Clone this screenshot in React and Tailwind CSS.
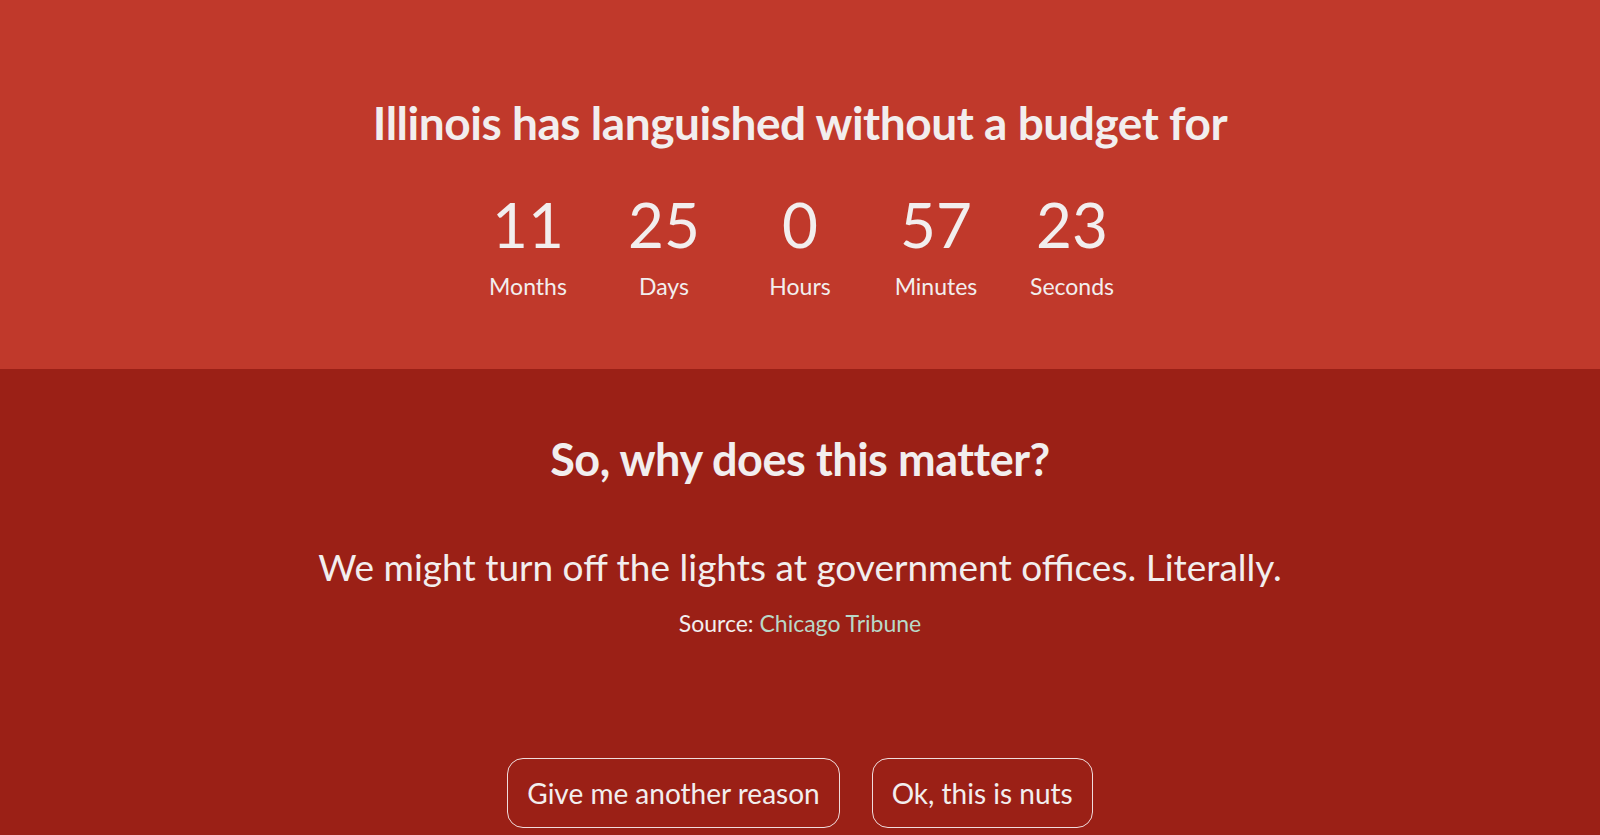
const units = [
  { value: "11", label: "Months" },
  { value: "25", label: "Days" },
  { value: "0", label: "Hours" },
  { value: "57", label: "Minutes" },
  { value: "23", label: "Seconds" },
];

export default function App() {
  return (
    <div className="min-h-[835px] bg-[#9b2016] font-['Lato',sans-serif] text-[#f2eeee]">
      {/* Countdown */}
      <section className="flex h-[369px] flex-col items-center bg-[#c0392b] pt-[100px]">
        <h1 className="text-[46px] font-bold leading-none tracking-[-0.01em]">
          Illinois has languished without a budget for
        </h1>
        <div className="mt-[47px] flex">
          {units.map((u) => (
            <div key={u.label} className="flex w-[136px] flex-col items-center">
              <span className="text-[62px] leading-none">{u.value}</span>
              <span className="mt-[20px] text-[23px] leading-none">{u.label}</span>
            </div>
          ))}
        </div>
      </section>

      {/* Reason */}
      <section className="flex flex-col items-center pt-[68px]">
        <h2 className="text-[45px] font-bold leading-none tracking-[-0.01em]">
          So, why does this matter?
        </h2>
        <p className="mt-[66px] text-[37px] leading-none">
          We might turn off the lights at government offices. Literally.
        </p>
        <p className="mt-[27px] text-[23px] leading-none">
          Source:{" "}
          <a href="#" className="text-[#b9d8c8]">
            Chicago Tribune
          </a>
        </p>
        <div className="mt-[123px] flex gap-[32px]">
          <button className="h-[70px] rounded-[16px] border border-[#f0dcdc] px-[19px] text-[28px] leading-none">
            Give me another reason
          </button>
          <button className="h-[70px] rounded-[16px] border border-[#f0dcdc] px-[19px] text-[28px] leading-none">
            Ok, this is nuts
          </button>
        </div>
      </section>
    </div>
  );
}
